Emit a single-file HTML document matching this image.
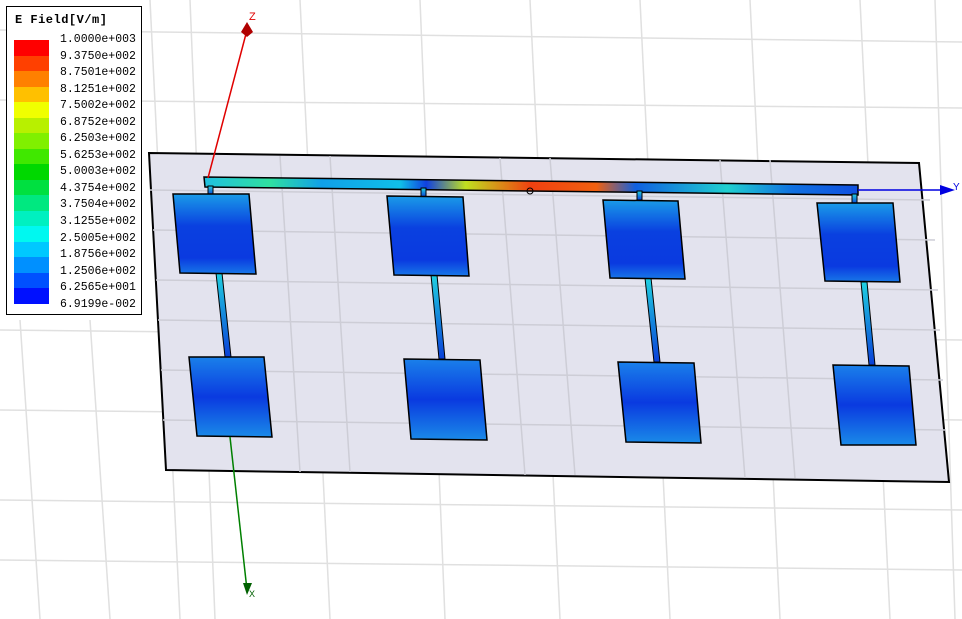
<!DOCTYPE html>
<html><head><meta charset="utf-8"><style>
html,body{margin:0;padding:0;background:#fff;width:962px;height:619px;overflow:hidden}
svg{position:absolute;left:0;top:0}
.leg{position:absolute;left:6px;top:6px;width:134px;height:307px;border:1px solid #000;background:#fff;font-family:"Liberation Mono",monospace;}
.t{position:absolute;left:8px;top:6px;font-size:12px;font-weight:bold;letter-spacing:0.5px}
.bar{position:absolute;left:7px;top:33px;width:35px}
.bar div{height:15.5px}
.lab{position:absolute;left:53px;top:25px;font-size:11.5px;line-height:16.55px}
</style></head><body>
<svg width="962" height="619" viewBox="0 0 962 619">
<defs>
<linearGradient id="pt" x1="0" y1="0" x2="0" y2="1"><stop offset="0" stop-color="#1a9be8"/><stop offset="0.4" stop-color="#0a40e0"/><stop offset="0.8" stop-color="#0a3ae0"/><stop offset="1" stop-color="#1878e8"/></linearGradient>
<linearGradient id="pb" x1="0" y1="0" x2="0" y2="1"><stop offset="0" stop-color="#1a80ea"/><stop offset="0.5" stop-color="#0a3ae0"/><stop offset="1" stop-color="#1a8ae8"/></linearGradient>
<linearGradient id="fl" x1="0" y1="0" x2="1" y2="0"><stop offset="0" stop-color="#20c0e0"/><stop offset="0.1" stop-color="#30e0a0"/><stop offset="0.18" stop-color="#10a0e8"/><stop offset="0.3" stop-color="#10c0e8"/><stop offset="0.34" stop-color="#1040e0"/><stop offset="0.4" stop-color="#c0e020"/><stop offset="0.5" stop-color="#f04010"/><stop offset="0.6" stop-color="#f06010"/><stop offset="0.66" stop-color="#1060e0"/><stop offset="0.8" stop-color="#20d0d0"/><stop offset="0.9" stop-color="#1070e0"/><stop offset="1" stop-color="#1050e0"/></linearGradient>
<linearGradient id="st" x1="0" y1="0" x2="0" y2="1"><stop offset="0" stop-color="#20d0e0"/><stop offset="1" stop-color="#0a40d8"/></linearGradient>
</defs>
<g stroke="#e0e0e0" stroke-width="1.5" fill="none">
<line x1="0" y1="30" x2="962" y2="42"/><line x1="0" y1="100" x2="962" y2="108"/>
<line x1="0" y1="330" x2="962" y2="340"/><line x1="0" y1="410" x2="962" y2="420"/>
<line x1="0" y1="500" x2="962" y2="510"/><line x1="0" y1="560" x2="962" y2="570"/>
<line x1="150" y1="0" x2="180" y2="619"/><line x1="190" y1="0" x2="215" y2="619"/>
<line x1="300" y1="0" x2="330" y2="619"/><line x1="420" y1="0" x2="445" y2="619"/>
<line x1="530" y1="0" x2="560" y2="619"/><line x1="640" y1="0" x2="670" y2="619"/>
<line x1="750" y1="0" x2="780" y2="619"/><line x1="860" y1="0" x2="890" y2="619"/>
<line x1="935" y1="0" x2="955" y2="619"/><line x1="20" y1="320" x2="40" y2="619"/><line x1="90" y1="320" x2="110" y2="619"/>
</g>
<polygon points="149,153 919,163 949,482 166,470" fill="#e3e3ee" stroke="#000" stroke-width="2"/>
<g stroke="#cdcdd6" stroke-width="1.5">
<line x1="150" y1="190" x2="930" y2="200"/><line x1="153" y1="230" x2="935" y2="240"/><line x1="156" y1="280" x2="938" y2="290"/><line x1="158" y1="320" x2="940" y2="330"/><line x1="161" y1="370" x2="943" y2="380"/><line x1="163" y1="420" x2="946" y2="430"/>
<line x1="280" y1="156" x2="300" y2="472"/><line x1="330" y1="156" x2="350" y2="472"/><line x1="500" y1="158" x2="525" y2="475"/><line x1="550" y1="158" x2="575" y2="475"/><line x1="720" y1="160" x2="745" y2="478"/><line x1="770" y1="160" x2="795" y2="478"/>
</g>
<polygon points="204,177 858,185 858,195 205,187" fill="url(#fl)" stroke="#000" stroke-width="1.5"/>
<g fill="url(#st)" stroke="#000" stroke-width="1">
<rect x="208" y="186" width="5" height="9"/><rect x="421" y="188" width="5" height="9"/><rect x="637" y="191" width="5" height="9"/><rect x="852" y="194" width="5" height="10"/>
<polygon points="216,273 222,273 231,357 225,357"/><polygon points="431,275 437,275 445,359 439,359"/><polygon points="645,278 651,278 660,362 654,362"/><polygon points="861,282 867,282 875,365 869,365"/>
</g>
<g stroke="#000" stroke-width="1.5">
<polygon points="173,194 249,194 256,274 180,273" fill="url(#pt)"/>
<polygon points="387,196 463,197 469,276 394,275" fill="url(#pt)"/>
<polygon points="603,200 678,201 685,279 610,278" fill="url(#pt)"/>
<polygon points="817,203 893,203 900,282 825,281" fill="url(#pt)"/>
<polygon points="189,357 264,357 272,437 197,436" fill="url(#pb)"/>
<polygon points="404,359 480,360 487,440 411,439" fill="url(#pb)"/>
<polygon points="618,362 694,363 701,443 626,442" fill="url(#pb)"/>
<polygon points="833,365 909,366 916,445 841,445" fill="url(#pb)"/>
</g>
<line x1="208" y1="178" x2="247" y2="30" stroke="#e00000" stroke-width="1.5"/>
<polygon points="241,32 247,22 253,32 247,37" fill="#b00000"/>
<text x="249" y="20" font-family="Liberation Sans,sans-serif" font-size="11" fill="#e00000">Z</text>
<line x1="858" y1="190" x2="945" y2="190" stroke="#0000e0" stroke-width="1.5"/>
<polygon points="940,185 955,190 940,195" fill="#0000e0"/>
<text x="953" y="190" font-family="Liberation Sans,sans-serif" font-size="10" fill="#0000e0">Y</text>
<line x1="230" y1="437" x2="247" y2="590" stroke="#008000" stroke-width="1.5"/>
<polygon points="243,583 247,595 252,583" fill="#006000"/>
<text x="249" y="597" font-family="Liberation Sans,sans-serif" font-size="9" fill="#006000">X</text>
<circle cx="530" cy="191" r="3" fill="none" stroke="#000"/>
</svg>
<div class="leg">
<div class="t">E Field[V/m]</div>
<div class="bar">
<div style="background:#ff0000"></div><div style="background:#ff4000"></div><div style="background:#ff8000"></div><div style="background:#ffc000"></div><div style="background:#f0ff00"></div><div style="background:#b8f000"></div><div style="background:#80f000"></div><div style="background:#40e800"></div><div style="background:#00d800"></div><div style="background:#00e040"></div><div style="background:#00e880"></div><div style="background:#00f0c0"></div><div style="background:#00f8f0"></div><div style="background:#00c8ff"></div><div style="background:#0090ff"></div><div style="background:#0050ff"></div><div style="background:#0010ff"></div>
</div>
<div class="lab">1.0000e+003<br>9.3750e+002<br>8.7501e+002<br>8.1251e+002<br>7.5002e+002<br>6.8752e+002<br>6.2503e+002<br>5.6253e+002<br>5.0003e+002<br>4.3754e+002<br>3.7504e+002<br>3.1255e+002<br>2.5005e+002<br>1.8756e+002<br>1.2506e+002<br>6.2565e+001<br>6.9199e-002</div>
</div>
</body></html>
